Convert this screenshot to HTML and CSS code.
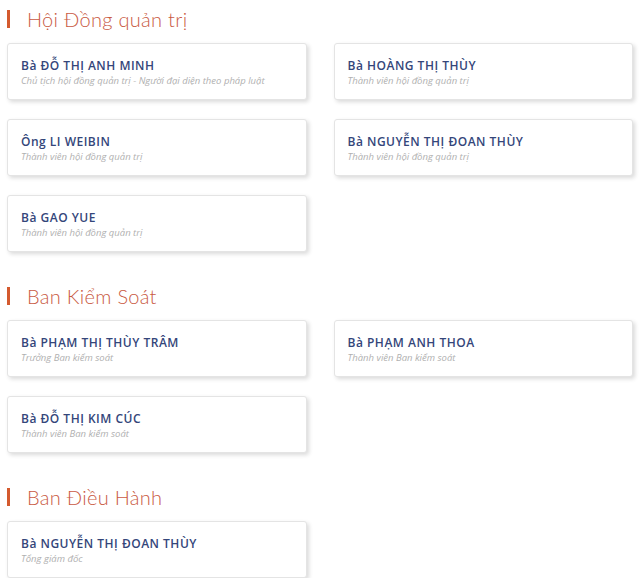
FILE: index.html
```html
<!DOCTYPE html>
<html lang="vi">
<head>
    <meta charset="UTF-8">
    <meta name="viewport" content="width=device-width, initial-scale=1.0">
    <title>Cơ cấu tổ chức</title>
    <link rel="stylesheet" href="styles.css">
</head>
<body>
    <div class="board">
        <section class="group">
            <h2 class="group-title">Hội Đồng quản trị</h2>
            <div class="member-grid">
                <div class="member">
                    <div class="member-name">Bà ĐỖ THỊ ANH MINH</div>
                    <div class="member-role">Chủ tịch hội đồng quản trị - Người đại diện theo pháp luật</div>
                </div>
                <div class="member">
                    <div class="member-name">Bà HOÀNG THỊ THÙY</div>
                    <div class="member-role">Thành viên hội đồng quản trị</div>
                </div>
                <div class="member">
                    <div class="member-name">Ông LI WEIBIN</div>
                    <div class="member-role">Thành viên hội đồng quản trị</div>
                </div>
                <div class="member">
                    <div class="member-name">Bà NGUYỄN THỊ ĐOAN THÙY</div>
                    <div class="member-role">Thành viên hội đồng quản trị</div>
                </div>
                <div class="member">
                    <div class="member-name">Bà GAO YUE</div>
                    <div class="member-role">Thành viên hội đồng quản trị</div>
                </div>
            </div>
        </section>

        <section class="group">
            <h2 class="group-title">Ban Kiểm Soát</h2>
            <div class="member-grid">
                <div class="member">
                    <div class="member-name">Bà PHẠM THỊ THÙY TRÂM</div>
                    <div class="member-role">Trưởng Ban kiểm soát</div>
                </div>
                <div class="member">
                    <div class="member-name">Bà PHẠM ANH THOA</div>
                    <div class="member-role">Thành viên Ban kiểm soát</div>
                </div>
                <div class="member">
                    <div class="member-name">Bà ĐỖ THỊ KIM CÚC</div>
                    <div class="member-role">Thành viên Ban kiểm soát</div>
                </div>
            </div>
        </section>

        <section class="group">
            <h2 class="group-title">Ban Điều Hành</h2>
            <div class="member-grid">
                <div class="member">
                    <div class="member-name">Bà NGUYỄN THỊ ĐOAN THÙY</div>
                    <div class="member-role">Tổng giám đốc</div>
                </div>
            </div>
        </section>
    </div>
</body>
</html>
```

FILE: styles.css
```css
:root {
    --accent: #d45a2e;
    --title: #c95a43;
    --name: #34467a;
    --muted: #b0b0b0;
}

* {
    box-sizing: border-box;
}

body {
    margin: 0;
    background: #fff;
    font-family: 'Open Sans', sans-serif;
}

.board {
    padding: 10px 7px 0;
}

.group + .group {
    margin-top: 35px;
}

.group-title {
    margin: 0 0 15px;
    padding-left: 17px;
    border-left: 3px solid var(--accent);
    height: 18px;
    line-height: 18px;
    font-family: Lato, sans-serif;
    font-size: 20px;
    font-weight: 300;
    letter-spacing: 0.3px;
    color: var(--title);
}

.member-grid {
    display: grid;
    grid-template-columns: 1fr 1fr;
    column-gap: 27px;
    row-gap: 19px;
}

.member {
    height: 57px;
    padding: 15px 13px 0;
    background: #fff;
    border: 1px solid #e4e4e4;
    border-radius: 3px;
    box-shadow: 2px 2px 4px rgba(0,0,0,0.15);
}

.member-name {
    font-size: 12px;
    font-weight: 600;
    line-height: 14px;
    letter-spacing: 0.5px;
    color: var(--name);
}

.member-role {
    margin-top: 2px;
    font-size: 9.5px;
    font-style: italic;
    line-height: 12px;
    color: var(--muted);
}
```
